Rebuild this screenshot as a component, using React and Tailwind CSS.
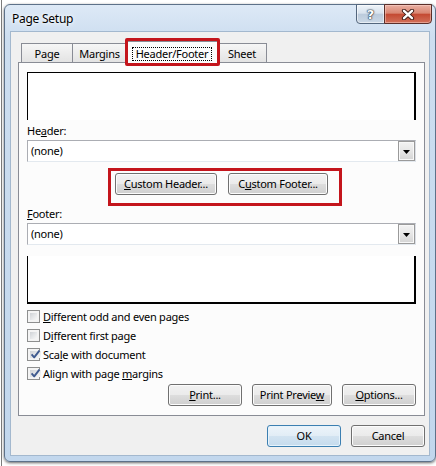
import React from "react";

function Btn({ className = "", def = false, children }) {
  return (
    <div
      className={`flex h-[22px] shrink-0 items-center justify-center rounded-[3px] border leading-[14px] ${
        def
          ? "border-[#3c7fb1] bg-[linear-gradient(180deg,#edf4fa_0%,#e2edf6_48%,#d2e3f1_52%,#c5dbed_100%)] shadow-[inset_0_0_0_1px_#e6f3fc]"
          : "border-[#707070] bg-[linear-gradient(180deg,#f2f2f2_0%,#ebebeb_48%,#dddddd_52%,#cfcfcf_100%)] shadow-[inset_0_0_0_1px_#fcfcfc]"
      } ${className}`}
    >
      {children}
    </div>
  );
}

function Combo() {
  return (
    <div className="flex h-[22px] items-center border border-[#abadb3] border-b-[#e3e9ef] border-r-[#dbdfe6] bg-white pl-[3px]">
      <span className="flex-1 leading-[14px]">(none)</span>
      <div className="flex h-[20px] w-[17px] items-center justify-center border border-[#9a9a9a] bg-[linear-gradient(180deg,#f3f3f3_0%,#e6e6e6_50%,#d4d4d4_100%)] shadow-[inset_0_0_0_1px_#f8f8f8]">
        <svg width="7" height="4" viewBox="0 0 7 4" className="mt-[1px]">
          <polygon points="0,0 7,0 3.5,4" fill="#000" />
        </svg>
      </div>
    </div>
  );
}

function Check({ checked, children }) {
  return (
    <div className="flex h-[19px] items-center gap-[3px]">
      <div className="flex h-[13px] w-[13px] shrink-0 border border-[#8e8f8f] bg-[#f4f4f4] p-[2px]">
        <div className="flex flex-1 items-center justify-center bg-[linear-gradient(135deg,#cfd2d6_0%,#e4e6e8_50%,#f8f8f8_100%)]">
          {checked && (
            <svg width="11" height="11" viewBox="0 0 11 11" className="shrink-0 overflow-visible">
              <path d="M1.6 5.4 L4.2 8.4 L9.4 1.6" fill="none" stroke="#3f5a8f" strokeWidth="1.9" strokeLinejoin="round" />
            </svg>
          )}
        </div>
      </div>
      <span className="leading-[14px]">{children}</span>
    </div>
  );
}

export default function App() {
  return (
    <div className="h-[466px] w-[436px] overflow-hidden bg-white bg-[linear-gradient(to_right,#fff_1px,#7c7c7c_1px,#7c7c7c_2px,#fff_2px)] pl-[4px] pt-[4px] font-['Noto_Sans',sans-serif] text-[11px] tracking-[-0.25px] text-black">
      <div className="flex h-[458px] w-[432px] flex-col rounded-[6px] border border-[#5d7189] bg-[linear-gradient(180deg,#dde9f6_0%,#cddef0_7%,#c2d7ed_100%)] shadow-[0_1px_3px_rgba(0,0,0,0.6)]">
        {/* title bar */}
        <div className="flex h-[27px] shrink-0">
          <span className="pl-[7px] pt-[6px] text-[12px] leading-[16px] [text-shadow:0_0_6px_#fff,0_0_3px_#fff]">
            Page Setup
          </span>
          <div className="ml-auto mr-[3px] flex -mt-px">
            <div className="flex h-[20px] w-[29px] items-center justify-center rounded-bl-[4px] border border-[#53667d] bg-[linear-gradient(180deg,#eef3f8_0%,#d9e3ee_45%,#bccbdc_52%,#cbd8e6_100%)] shadow-[inset_0_0_0_1px_rgba(255,255,255,0.55)]">
              <span className="font-['DejaVu_Sans',sans-serif] text-[13px] font-bold leading-[13px] text-white [text-shadow:0_0_1px_#1f2d3d,0_0_1px_#1f2d3d,0_0_2px_#1f2d3d]">
                ?
              </span>
            </div>
            <div className="-ml-px flex h-[20px] w-[48px] items-center justify-center rounded-br-[4px] border border-[#5a2e29] bg-[linear-gradient(180deg,#eab0a3_0%,#d98672_45%,#c44a33_52%,#d2705a_100%)] shadow-[inset_0_0_0_1px_rgba(255,220,210,0.45)]">
              <svg width="14" height="11" viewBox="0 0 14 11">
                <path d="M3 1.8 L11 9.2 M11 1.8 L3 9.2" stroke="#3d1a15" strokeWidth="4.2" strokeLinecap="round" />
                <path d="M3 1.8 L11 9.2 M11 1.8 L3 9.2" stroke="#fff" strokeWidth="2.4" strokeLinecap="round" />
              </svg>
            </div>
          </div>
        </div>

        {/* client area */}
        <div className="mx-[6px] flex h-[423px] shrink-0 flex-col bg-[#f0f0f0] pl-[7px] pr-[4px] pt-[9px] shadow-[0_0_0_1px_#a3b8ce]">
          {/* tabs */}
          <div className="flex h-[21px] items-end pl-[3px]">
            <div className="flex h-[19px] w-[52px] justify-center border border-b-0 border-[#898c95] bg-[linear-gradient(180deg,#f6f6f6,#e3e3e3)] pt-[2px] leading-[15px]">
              Page
            </div>
            <div className="-ml-px flex h-[19px] w-[55px] justify-center border border-b-0 border-[#898c95] bg-[linear-gradient(180deg,#f6f6f6,#e3e3e3)] pt-[2px] leading-[15px]">
              Margins
            </div>
            <div className="relative z-10 -mb-px -ml-px flex h-[22px] w-[92px] justify-center border border-b-0 border-[#898c95] bg-[#fcfcfc] pt-[5px]">
              <span className="h-[14px] border border-dotted border-black px-[3px] leading-[12px]">Header/Footer</span>
              <div className="pointer-events-none absolute -bottom-[3px] -left-[2px] -right-[3px] -top-[4px] rounded-[2px] border-[3px] border-[#c4151c]" />
            </div>
            <div className="-ml-px flex h-[19px] w-[50px] justify-center border border-b-0 border-[#898c95] bg-[linear-gradient(180deg,#f6f6f6,#e3e3e3)] pt-[2px] leading-[15px]">
              Sheet
            </div>
          </div>

          {/* panel */}
          <div className="flex h-[354px] w-[407px] flex-col border border-[#898c95] bg-[#fcfcfc] px-[8px] pb-[9px] pt-[9px]">
            <div className="h-[48px] shrink-0 border-l border-r-2 border-t border-black bg-white" />
            <div className="h-[20px] shrink-0 pt-[3px] leading-[15px]">
              He<u>a</u>der:
            </div>
            <Combo />
            <div className="mt-[11px] flex justify-center">
              <div className="relative flex gap-[11px]">
                <Btn className="w-[102px]">
                  <span>
                    <u>C</u>ustom Header...
                  </span>
                </Btn>
                <Btn className="w-[100px]">
                  <span>
                    C<u>u</u>stom Footer...
                  </span>
                </Btn>
                <div className="pointer-events-none absolute -bottom-[11px] -left-[7px] -right-[14px] -top-[5px] border-[3px] border-[#c4151c]" />
              </div>
            </div>
            <div className="h-[28px] shrink-0 pt-[11px] leading-[15px]">
              <u>F</u>ooter:
            </div>
            <Combo />
            <div className="mt-[11px] h-[48px] shrink-0 border-b-2 border-l border-r-2 border-black bg-white" />
            <div className="mt-[3px] flex flex-col">
              <Check>
                <u>D</u>ifferent odd and even pages
              </Check>
              <Check>
                D<u>i</u>fferent first page
              </Check>
              <Check checked>
                Sca<u>l</u>e with document
              </Check>
              <Check checked>
                Align with page <u>m</u>argins
              </Check>
            </div>
            <div className="mt-px flex justify-end gap-[10px]">
              <Btn className="w-[74px]">
                <span>
                  <u>P</u>rint...
                </span>
              </Btn>
              <Btn className="w-[80px]">
                <span>
                  Print Previe<u>w</u>
                </span>
              </Btn>
              <Btn className="w-[74px]">
                <span>
                  <u>O</u>ptions...
                </span>
              </Btn>
            </div>
          </div>

          {/* dialog buttons */}
          <div className="mt-[9px] flex justify-end gap-[10px]">
            <Btn def className="w-[74px]">
              OK
            </Btn>
            <Btn className="w-[74px]">Cancel</Btn>
          </div>
        </div>
      </div>
    </div>
  );
}
